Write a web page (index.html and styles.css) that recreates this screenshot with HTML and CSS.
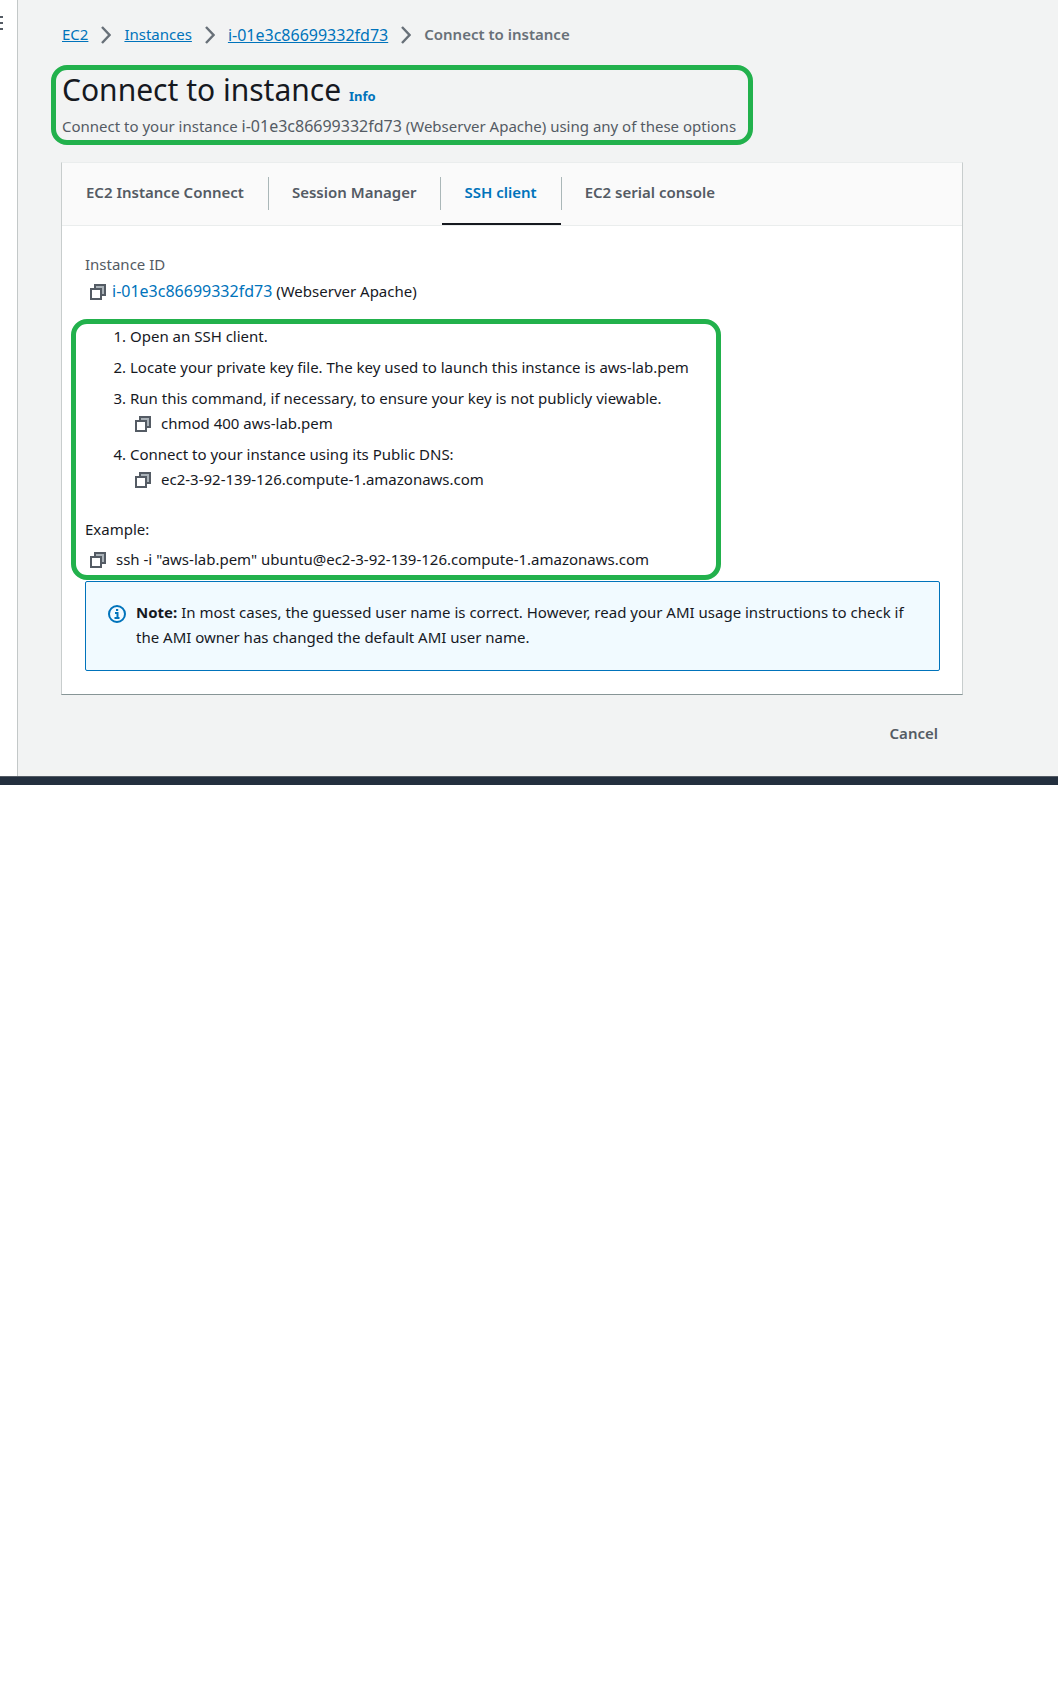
FILE: index.html
```html
<!DOCTYPE html>
<html lang="en">
<head>
<meta charset="utf-8">
<meta name="viewport" content="width=device-width, initial-scale=1">
<title>Connect to instance</title>
<link rel="stylesheet" href="styles.css">
</head>
<body>
<svg class="symbols" aria-hidden="true">
  <symbol id="copy" viewBox="0 0 16 16">
    <rect x="5" y="1" width="10" height="10" fill="#aab2b8" stroke="#545b64" stroke-width="2"/>
    <rect x="1" y="5" width="10" height="10" fill="#fff" stroke="#545b64" stroke-width="2"/>
  </symbol>
  <symbol id="chevron" viewBox="0 0 10 18">
    <path d="M1 1l7.500 8-7.500 8" fill="none" stroke="#687078" stroke-width="2.400"/>
  </symbol>
</svg>
<div class="shell">
  <aside class="rail">
    <button class="menu" aria-label="Open navigation">
      <svg width="3" height="14" viewBox="0 0 3 14"><path d="M0 1h3M0 7h3M0 13h3" stroke="#545b64" stroke-width="2"/></svg>
    </button>
  </aside>
  <main class="content">
    <nav class="breadcrumbs" aria-label="Breadcrumb">
      <a href="#ec2">EC2</a>
      <svg class="chevron"><use href="#chevron"/></svg>
      <a href="#instances">Instances</a>
      <svg class="chevron"><use href="#chevron"/></svg>
      <a class="id" href="#instance">i-01e3c86699332fd73</a>
      <svg class="chevron"><use href="#chevron"/></svg>
      <span class="current">Connect to instance</span>
    </nav>
    <header class="callout page-header">
      <h1>Connect to instance <a class="info" href="#info">Info</a></h1>
      <p>Connect to your instance <span class="id">i-01e3c86699332fd73</span> (Webserver Apache) using any of these options</p>
    </header>
    <section class="panel">
      <div class="tabs" role="tablist">
        <button class="tab" role="tab">EC2 Instance Connect</button>
        <button class="tab" role="tab">Session Manager</button>
        <button class="tab active" role="tab" aria-selected="true">SSH client</button>
        <button class="tab" role="tab">EC2 serial console</button>
      </div>
      <div class="panel-body">
        <div class="label">Instance ID</div>
        <div class="copy-row">
          <button class="copy" aria-label="Copy instance ID"><svg><use href="#copy"/></svg></button>
          <span class="instance"><a class="id" href="#instance">i-01e3c86699332fd73</a> (Webserver Apache)</span>
        </div>
        <div class="callout steps">
          <ol>
            <li>Open an SSH client.</li>
            <li>Locate your private key file. The key used to launch this instance is aws-lab.pem</li>
            <li>Run this command, if necessary, to ensure your key is not publicly viewable.
              <div class="copy-row">
                <button class="copy" aria-label="Copy command"><svg><use href="#copy"/></svg></button>
                <span class="value">chmod 400 aws-lab.pem</span>
              </div>
            </li>
            <li>Connect to your instance using its Public DNS:
              <div class="copy-row">
                <button class="copy" aria-label="Copy public DNS"><svg><use href="#copy"/></svg></button>
                <span class="value">ec2-3-92-139-126.compute-1.amazonaws.com</span>
              </div>
            </li>
          </ol>
          <p class="example">Example:</p>
          <div class="copy-row">
            <button class="copy" aria-label="Copy example"><svg><use href="#copy"/></svg></button>
            <span class="value">ssh -i "aws-lab.pem" ubuntu@ec2-3-92-139-126.compute-1.amazonaws.com</span>
          </div>
        </div>
        <div class="note">
          <svg class="note-icon" viewBox="0 0 18 18" aria-hidden="true">
            <circle cx="9" cy="9" r="8" fill="none" stroke="#0073bb" stroke-width="2"/>
            <path d="M7 8h2.500v5M6.500 13h5M8 5h2.200" fill="none" stroke="#0073bb" stroke-width="2"/>
          </svg>
          <p><strong>Note:</strong> In most cases, the guessed user name is correct. However, read your AMI usage instructions to check if the AMI owner has changed the default AMI user name.</p>
        </div>
      </div>
    </section>
    <div class="actions"><button class="cancel">Cancel</button></div>
  </main>
</div>
<footer class="bottom-bar"></footer>
</body>
</html>
```

FILE: styles.css
```css
* { box-sizing: border-box; }
body {
  margin: 0;
  background: #fff;
  color: #16191f;
  font: 15px/25px "Noto Sans", "Open Sans", sans-serif;
}
h1, p, ol { margin: 0; padding: 0; }
button {
  margin: 0;
  padding: 0;
  border: 0;
  background: none;
  color: inherit;
  font: inherit;
  cursor: pointer;
}
svg { display: block; flex: none; }
a { color: #0073bb; text-decoration: none; }
.symbols { position: absolute; width: 0; height: 0; }
.id { font-size: 16px; line-height: 20px; }

.shell { display: flex; background: #f2f3f3; }
.rail {
  flex: none;
  width: 18px;
  padding-top: 16px;
  background: #fff;
  border-right: 1px solid #c3c8c8;
}
.menu { display: block; }
.content { flex: 1; min-width: 0; padding: 22px 95px 30px 44px; }

.breadcrumbs { display: flex; align-items: center; gap: 13px; }
.breadcrumbs a { text-decoration: underline; }
.chevron { width: 10px; height: 18px; }
.current { color: #687078; font-weight: 600; }

.callout { border: 5px solid #22b14c; border-radius: 16px; }
.page-header {
  width: fit-content;
  margin: 18px 0 17px -11px;
  padding: 0 12px 1px 6px;
}
h1 { margin-bottom: 3px; font-size: 30px; font-weight: 400; line-height: 40px; }
.info { font-size: 13px; font-weight: 700; line-height: 16px; }
.page-header p { color: #545b64; line-height: 26px; }

.panel {
  margin-left: -1px;
  background: #fff;
  border: 1px solid #c8cdcd;
  border-top-color: #eaeded;
  border-bottom-color: #879596;
}
.tabs {
  display: flex;
  height: 63px;
  background: #fafafa;
  border-bottom: 1px solid #eaeded;
}
.tab {
  position: relative;
  padding: 0 24px 4px;
  color: #545b64;
  font-weight: 600;
}
.tab + .tab::before {
  content: "";
  position: absolute;
  top: 14px;
  left: 0;
  width: 1px;
  height: 33px;
  background: #aab7b8;
}
.active { color: #0073bb; }
.active::after {
  content: "";
  position: absolute;
  right: 0;
  bottom: 0;
  left: 2px;
  height: 2px;
  background: #16191f;
}

.panel-body { padding: 26px 22px 23px 23px; }
.label { margin-bottom: 2px; color: #545b64; }
.copy-row { display: flex; align-items: center; padding-left: 5px; }
.copy svg { width: 16px; height: 16px; }
.instance { margin-left: 6px; }
.steps {
  max-width: 650px;
  margin: 15px 0 1px -14px;
  padding: 0 9px 3px;
}
ol { display: grid; gap: 6px; padding-left: 45px; }
.value { margin-left: 10px; }
.example { margin: 25px 0 5px; }
.note {
  display: flex;
  gap: 10px;
  padding: 18px 22px 20px;
  background: #f1faff;
  border: 1px solid #0073bb;
  border-radius: 2px;
}
.note-icon { width: 18px; height: 18px; margin-top: 5px; }

.actions { display: flex; justify-content: flex-end; padding: 26px 25px 0 0; }
.cancel { color: #545b64; font-weight: 600; }
.bottom-bar { height: 9px; background: #232f3e; border-top: 1px solid #545b64; }
```
